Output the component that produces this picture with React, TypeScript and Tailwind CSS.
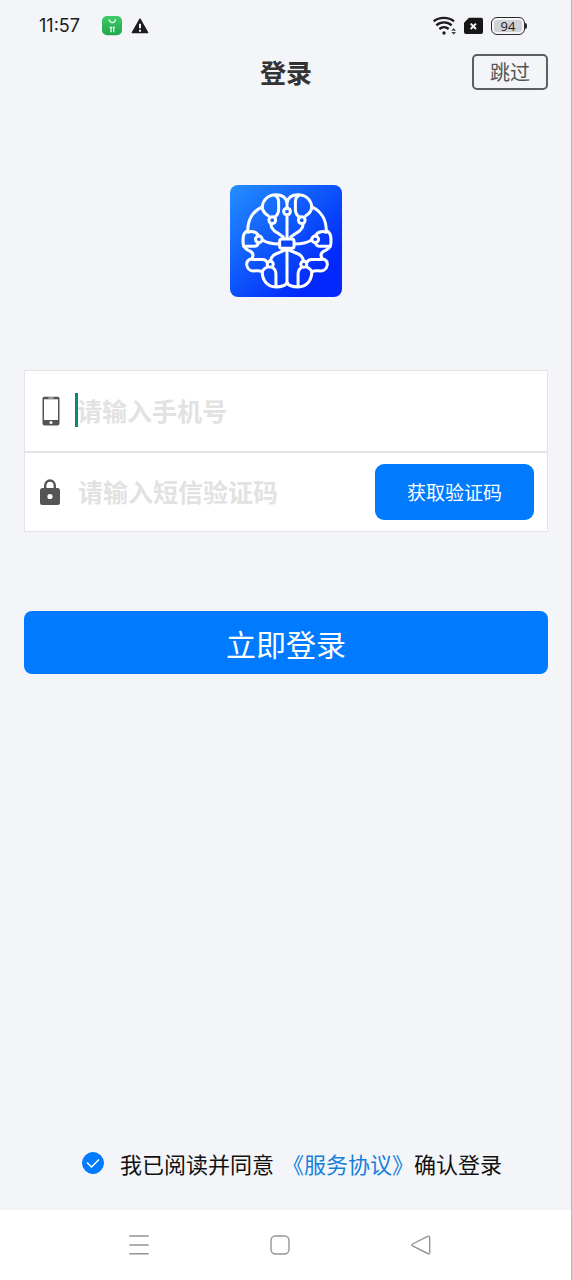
import { useState } from "react";

function StatusBar() {
  return (
    <div className="flex h-[52px] items-center justify-between pr-11 pl-[39px] text-[#1c1c1c]">
      <div className="flex items-center">
        <span className="font-['Inter',sans-serif] text-lg">11:57</span>
        <svg className="ml-[22px] h-5 w-5" viewBox="306 47 60 60" aria-hidden="true">
          <defs>
            <linearGradient id="app" x1="0" y1="0" x2="0" y2="1">
              <stop offset="0" stopColor="#3fca69" />
              <stop offset="1" stopColor="#22a64a" />
            </linearGradient>
          </defs>
          <rect x="306" y="47" width="60" height="58" rx="15" fill="url(#app)" />
          <g fill="none" stroke="#e6ffec" strokeWidth="4">
            <path d="M327 57l3 6c4 5 10 5 14 0l3-6" />
            <path d="M329 81h7M338 81h7M333 81v15M341 81v15" />
          </g>
        </svg>
        <svg className="ml-2 h-5 w-5" viewBox="390 47 60 60" aria-hidden="true">
          <path
            d="M420 56l23 41h-46z"
            fill="#1c1c1c"
            stroke="#1c1c1c"
            strokeWidth="4"
            strokeLinejoin="round"
          />
          <path d="M420 70v14M420 88v6" stroke="#f3f5f9" strokeWidth="6" />
        </svg>
      </div>

      <div className="flex items-center">
        <svg className="h-5 w-6" viewBox="99 45 72 60" aria-hidden="true">
          <g fill="none" stroke="#1c1c1c" strokeWidth="7">
            <path d="M101 61c17-14 44-14 61 0" />
            <path d="M109 73c13-12 33-12 46 0" />
            <path d="M118 84c8-7 20-7 28 0" />
          </g>
          <circle cx="132" cy="96" r="5" fill="#1c1c1c" />
          <path d="M154 89l7-8 7 8zM154 93l7 8 7-8z" fill="#444" />
        </svg>
        <svg className="ml-1.5 h-5 w-[21px]" viewBox="189 45 63 60" aria-hidden="true">
          <path
            d="M207 50h36q6 0 6 6v37q0 6-6 6h-45q-6 0-6-6V65z"
            fill="#161616"
          />
          <path d="M212 68l16 16M228 68l-16 16" stroke="#f3f5f9" strokeWidth="6" />
        </svg>
        <div className="ml-[7px] flex items-center">
          <div className="h-[18px] w-[34px] rounded-md border border-[#2b2b2b] p-0.5">
            <div className="flex h-full items-center justify-center rounded-[3px] bg-[#cfd1d4] font-['Open_Sans',sans-serif] text-[13px] leading-3 text-[#222]">
              94
            </div>
          </div>
          <div className="h-1.5 w-0.5 rounded-r-sm bg-[#2b2b2b]" />
        </div>
      </div>
    </div>
  );
}

// One half of the brain, the other one is mirrored at x = 201
function BrainHalf() {
  return (
    <g>
      <path d="M201 80C196 63 184 58 168 58C144 58 129 74 127 94C101 106 84 131 84 164C74 170 70 177 70 188V203C70 215 79 222 94 228C101 234 101 242 95 250C84 252 80 259 81 268C83 281 95 287 108 285C115 284 121 285 127 288C128 315 143 333 168 333C184 333 196 329 201 321" />
      <path d="M127 94C128 107 136 115 145 121" />
      <path d="M166 60C173 64 176 70 176 80V103C176 115 171 120 164 125" />
      <path d="M153 144C153 158 160 165 171 171L190 184" />
      <path d="M84 170C96 164 112 170 116 181" />
      <path d="M72 212H102C111 212 115 208 116 200" />
      <path d="M128 193C140 201 156 205 177 205" />
      <path d="M198 222L169 234C158 239 153 245 152 256" />
      <path d="M99 251H129C137 251 140 256 143 261" />
      <path d="M127 288C129 280 136 277 143 273" />
      <path d="M158 275C166 280 168 286 168 296V331" />
      <circle cx="157" cy="134" r="10" />
      <circle cx="117" cy="191" r="10" />
      <circle cx="151" cy="265" r="9" />
    </g>
  );
}

function Logo() {
  return (
    <svg
      className="mx-auto mt-[93px] h-28 w-28 shrink-0"
      viewBox="31 29 334 334"
      aria-hidden="true"
    >
      <defs>
        <linearGradient id="logo" x1="0" y1="0" x2="1" y2="1">
          <stop offset="0" stopColor="#2490ff" />
          <stop offset="0.5" stopColor="#0c50fb" />
          <stop offset="0.8" stopColor="#0228fd" />
          <stop offset="1" stopColor="#0527ff" />
        </linearGradient>
      </defs>
      <rect x="31" y="29" width="334" height="334" rx="24" fill="url(#logo)" />
      <g fill="none" stroke="#fff" strokeWidth="9" strokeLinecap="round" strokeLinejoin="round">
        <BrainHalf />
        <g transform="translate(402 0) scale(-1 1)">
          <BrainHalf />
        </g>
        <path d="M201 80V97M201 119V190M201 218V322" />
        <circle cx="201" cy="108" r="10" />
        <rect x="179" y="190" width="43" height="28" rx="7" fill="#0b45fb" />
      </g>
    </svg>
  );
}

function PhoneIcon() {
  return (
    <svg className="h-[30px] w-5" viewBox="0 0 20 30" aria-hidden="true">
      <rect x="1.5" y="0.8" width="17" height="28.6" rx="1.8" fill="#555" />
      <rect x="3" y="3.3" width="14" height="20.7" fill="#fff" />
      <path d="M7.5 2h5" stroke="#ddd" strokeWidth="1" />
      <circle cx="10" cy="26.6" r="1.5" fill="#fff" />
    </svg>
  );
}

function LockIcon() {
  return (
    <svg className="h-[26px] w-5" viewBox="0 0 20 26" aria-hidden="true">
      <path
        d="M5.2 10V6.6a4.8 5.1 0 0 1 9.6 0V10"
        fill="none"
        stroke="#555"
        strokeWidth="2.4"
      />
      <rect x="0" y="9" width="20" height="17" rx="2.5" fill="#555" />
      <circle cx="10" cy="17.5" r="2.6" fill="#fff" />
    </svg>
  );
}

function NavBar() {
  return (
    <nav className="flex h-[70px] items-center justify-between bg-white pr-[139px] pl-32">
      <button aria-label="菜单">
        <svg className="h-[22px] w-[22px]" viewBox="0 0 22 22" fill="none" stroke="#949494" strokeWidth="1.4">
          <path d="M1.3 2h19.4M1.3 11h19.4M1.3 19.7h19.4" />
        </svg>
      </button>
      <button aria-label="主页">
        <svg className="h-[22px] w-[22px]" viewBox="0 0 22 22" fill="none" stroke="#949494" strokeWidth="1.4">
          <rect x="2" y="2" width="18" height="18" rx="4.5" />
        </svg>
      </button>
      <button aria-label="返回">
        <svg className="h-[22px] w-[22px]" viewBox="0 0 22 22" fill="none" stroke="#949494" strokeWidth="1.4">
          <path d="M2.6 10L17.6 2.3Q19.7 1.6 19.7 4V18Q19.7 20.4 17.6 19.5L2.6 12Q1 11 2.6 10z" />
        </svg>
      </button>
    </nav>
  );
}

export default function App() {
  const [phone, setPhone] = useState("");
  const [code, setCode] = useState("");
  const [agreed, setAgreed] = useState(true);

  return (
    <div className="flex min-h-screen flex-col border-r border-[#b4b5b8] bg-[#f3f5f9] font-['Noto_Sans_CJK_SC',sans-serif]">
      <StatusBar />

      <main className="flex grow flex-col pr-[23px] pl-6">
        <header className="grid h-10 grid-cols-[1fr_auto_1fr] items-center">
          <h1 className="col-start-2 text-[26px] leading-10 font-bold text-[#333]">登录</h1>
          <button className="h-9 w-[76px] justify-self-end rounded-[5px] border-2 border-[#5c5e62] text-xl leading-none text-[#555]">
            跳过
          </button>
        </header>

        <Logo />

        <form className="mt-[73px]" onSubmit={(e) => e.preventDefault()}>
          <div className="border border-[#e2e4e7] bg-white">
            <div className="flex h-20 items-center pl-4">
              <label htmlFor="phone" aria-label="手机号">
                <PhoneIcon />
              </label>
              <div className="relative ml-4 flex h-9 grow items-center">
                <input
                  id="phone"
                  type="tel"
                  value={phone}
                  onChange={(e) => setPhone(e.target.value)}
                  placeholder="请输入手机号"
                  className="h-9 w-full text-[25px] font-bold text-[#333] caret-[#008577] outline-none placeholder:text-[#e2e2e2]"
                />
                {phone === "" && (
                  <span className="absolute top-0 -left-0.5 h-[34px] w-[3px] bg-[#0a8a70]" />
                )}
              </div>
            </div>

            <div className="flex h-20 items-center border-t-2 border-[#e2e4e7] pr-[13px] pl-[15px]">
              <label htmlFor="code" aria-label="短信验证码">
                <LockIcon />
              </label>
              <input
                id="code"
                value={code}
                onChange={(e) => setCode(e.target.value)}
                placeholder="请输入短信验证码"
                className="ml-[18px] h-9 min-w-0 grow text-[25px] font-bold text-[#333] outline-none placeholder:text-[#e2e2e2]"
              />
              <button
                type="button"
                className="h-14 w-[159px] shrink-0 rounded-[9px] bg-[#007aff] text-[19px] text-white"
              >
                获取验证码
              </button>
            </div>
          </div>

          <button
            type="submit"
            className="mt-[79px] h-[63px] w-full rounded-lg bg-[#007aff] text-[30px] leading-none text-white"
          >
            立即登录
          </button>
        </form>

        <div className="mt-auto mb-8 flex h-[30px] items-center justify-center pl-3 text-[22px] text-[#111]">
          <span className="relative mr-4 h-[22px] w-[22px]">
            <input
              id="agree"
              type="checkbox"
              checked={agreed}
              onChange={(e) => setAgreed(e.target.checked)}
              className="block h-[22px] w-[22px] appearance-none rounded-full border border-[#007aff] checked:bg-[#007aff]"
            />
            {agreed && (
              <svg
                className="pointer-events-none absolute inset-0 h-[22px] w-[22px]"
                viewBox="0 0 22 22"
                fill="none"
                stroke="#fff"
                strokeWidth="1.5"
              >
                <path d="M5 10.5l4.5 4.5 7.5-7.5" />
              </svg>
            )}
          </span>
          <label htmlFor="agree">我已阅读并同意</label>
          <a href="#agreement" className="ml-2 text-[#1580dc]">
            《服务协议》
          </a>
          <span>确认登录</span>
        </div>
      </main>

      <NavBar />
    </div>
  );
}
